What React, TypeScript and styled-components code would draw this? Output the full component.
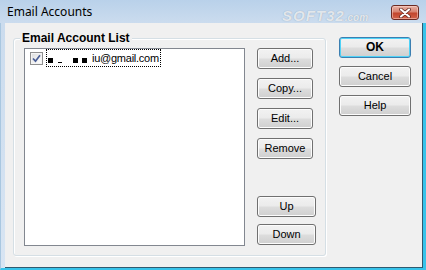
import React from 'react';
import styled, { createGlobalStyle } from 'styled-components';

const GlobalStyle = createGlobalStyle`
  html, body {
    margin: 0;
    padding: 0;
    overflow: hidden;
  }
  body {
    font-family: 'Liberation Sans', Arial, sans-serif;
  }
`;

const Window = styled.div`
  width: 426px;
  height: 270px;
  display: flex;
  flex-direction: column;
  background: linear-gradient(180deg, #b9d1ea 0px, #cbdcee 23px, #d8e5f3 100%);
  box-sizing: border-box;
`;

const TitleBar = styled.div`
  position: relative;
  height: 23px;
  flex: none;
  display: flex;
  align-items: flex-start;
  justify-content: space-between;
  padding: 0 7px 0 7px;
  box-sizing: border-box;
`;

const Title = styled.div`
  margin-top: 4px;
  font-family: 'Noto Sans', 'Liberation Sans', sans-serif;
  font-size: 12px;
  line-height: 16px;
  color: #000;
`;

const Watermark = styled.div`
  position: absolute;
  left: 282px;
  top: 7px;
  font-family: 'Liberation Sans', sans-serif;
  font-weight: bold;
  font-style: italic;
  font-size: 15px;
  letter-spacing: 1px;
  color: rgba(255, 255, 255, 0.75);
  text-shadow: 0 0 1px rgba(90, 110, 130, 0.6);

  small {
    font-size: 10px;
    letter-spacing: 0;
  }
`;

const CloseButton = styled.div`
  margin-top: 5px;
  width: 28px;
  height: 15px;
  box-sizing: border-box;
  border: 1px solid #6b2a22;
  border-radius: 3px;
  background: linear-gradient(180deg, #e8b4a8 0%, #d7826f 45%, #c2462d 55%, #d2624a 100%);
  box-shadow: inset 0 0 0 1px rgba(255, 220, 210, 0.5);
  display: flex;
  align-items: center;
  justify-content: center;
`;

const Body = styled.div`
  flex: 1;
  display: flex;
  padding-left: 4px;
  border-left: 1px solid #a9c7e0;
  border-right: 3px solid #37c3ea;
  border-bottom: 2px solid #37c3ea;
  min-height: 0;
`;

const Client = styled.div`
  flex: 1;
  display: flex;
  align-items: flex-start;
  padding: 14px 0 0 8px;
  background: #f0f0f0;
  border-right: 1px solid #2f5a70;
  border-bottom: 1px solid #2f5a70;
  box-sizing: border-box;
`;

const GroupBox = styled.div`
  margin-top: 1px;
  width: 313px;
  height: 218px;
  box-sizing: border-box;
  display: flex;
  flex-direction: column;
  border: 1px solid #d5dfe5;
  border-radius: 3px;
  box-shadow: inset 1px 1px 0 #ffffff, 1px 1px 0 #ffffff;
`;

const Legend = styled.div`
  align-self: flex-start;
  margin: -8px 0 0 6px;
  padding: 0 2px;
  background: #f0f0f0;
  font-weight: bold;
  font-size: 12px;
  line-height: 14px;
  color: #000;
`;

const GroupRow = styled.div`
  display: flex;
  margin-top: 3px;
  padding-left: 10px;
`;

const ListBox = styled.div`
  width: 221px;
  height: 198px;
  box-sizing: border-box;
  border: 1px solid #828790;
  background: #ffffff;
`;

const ListItem = styled.div`
  display: flex;
  align-items: center;
  height: 18px;
  padding-left: 5px;
`;

const CheckBox = styled.div`
  width: 13px;
  height: 13px;
  box-sizing: border-box;
  border: 1px solid #8f8f8f;
  background: linear-gradient(135deg, #dcdcdc 0%, #f6f6f6 70%, #ffffff 100%);
  box-shadow: inset 0 0 0 1px #f4f4f4;
  display: flex;
  align-items: center;
  justify-content: center;
`;

const FocusLabel = styled.div`
  margin-left: 3px;
  height: 18px;
  box-sizing: border-box;
  border: 1px dotted #000;
  display: flex;
  align-items: center;
  padding: 0 1px 0 1px;
  font-size: 11px;
  color: #000;
`;

const Redact = styled.span<{ $gap: number }>`
  display: inline-block;
  width: 5px;
  height: 5px;
  margin-left: ${(p) => p.$gap}px;
  margin-top: 5px;
  background: #000;
`;

const Dash = styled.span<{ $gap: number }>`
  display: inline-block;
  width: 4px;
  height: 1px;
  margin-left: ${(p) => p.$gap}px;
  margin-top: 9px;
  background: #000;
`;

const Email = styled.span`
  margin-left: 5px;
  letter-spacing: -0.25px;
`;

const ButtonCol = styled.div`
  display: flex;
  flex-direction: column;
  margin-left: 12px;
`;

const Btn = styled.button<{ $wide?: boolean; $gap?: number; $default?: boolean }>`
  width: ${(p) => (p.$wide ? 59 : 56)}px;
  height: 21px;
  margin: ${(p) => p.$gap ?? 0}px 0 0 0;
  padding: 0;
  box-sizing: border-box;
  border: 1px solid ${(p) => (p.$default ? '#3c7fb1' : '#707070')};
  border-radius: 3px;
  background: linear-gradient(180deg, #f2f2f2 0%, #ebebeb 48%, #dddddd 52%, #cfcfcf 100%);
  box-shadow: inset 0 0 0 1px ${(p) => (p.$default ? '#4fd2f7' : '#fcfcfc')};
  font-family: 'Liberation Sans', Arial, sans-serif;
  font-size: ${(p) => (p.$default ? 12 : 11)}px;
  font-weight: ${(p) => (p.$default ? 'bold' : 'normal')};
  color: #000;
  line-height: 19px;
  text-align: center;
`;

const SideCol = styled.div`
  display: flex;
  flex-direction: column;
  gap: 8px;
  margin-left: 13px;

  ${Btn} {
    width: 72px;
  }
`;

const CloseIcon = () => (
  <svg width="14" height="10" viewBox="0 0 14 10">
    <path d="M3 1.5 L11 8.5 M11 1.5 L3 8.5" stroke="#5a2018" strokeWidth="3.6" strokeLinecap="round" />
    <path d="M3 1.5 L11 8.5 M11 1.5 L3 8.5" stroke="#ffffff" strokeWidth="2.2" strokeLinecap="round" />
  </svg>
);

const CheckIcon = () => (
  <svg width="9" height="9" viewBox="0 0 9 9">
    <path d="M1 4.5 L3.5 7.2 L8 1.2" fill="none" stroke="#4a5e96" strokeWidth="1.7" />
  </svg>
);

export default function App() {
  return (
    <>
      <GlobalStyle />
      <Window>
        <TitleBar>
          <Title>Email Accounts</Title>
          <Watermark>
            SOFT32<small>.com</small>
          </Watermark>
          <CloseButton>
            <CloseIcon />
          </CloseButton>
        </TitleBar>
        <Body>
          <Client>
            <GroupBox>
              <Legend>Email Account List</Legend>
              <GroupRow>
                <ListBox>
                  <ListItem>
                    <CheckBox>
                      <CheckIcon />
                    </CheckBox>
                    <FocusLabel>
                      <Redact $gap={0} />
                      <Dash $gap={5} />
                      <Redact $gap={11} />
                      <Redact $gap={4} />
                      <Email>iu@gmail.com</Email>
                    </FocusLabel>
                  </ListItem>
                </ListBox>
                <ButtonCol>
                  <Btn>Add...</Btn>
                  <Btn $gap={9}>Copy...</Btn>
                  <Btn $gap={9}>Edit...</Btn>
                  <Btn $gap={9}>Remove</Btn>
                  <Btn $wide $gap={37}>Up</Btn>
                  <Btn $wide $gap={7}>Down</Btn>
                </ButtonCol>
              </GroupRow>
            </GroupBox>
            <SideCol>
              <Btn $default>OK</Btn>
              <Btn>Cancel</Btn>
              <Btn>Help</Btn>
            </SideCol>
          </Client>
        </Body>
      </Window>
    </>
  );
}
